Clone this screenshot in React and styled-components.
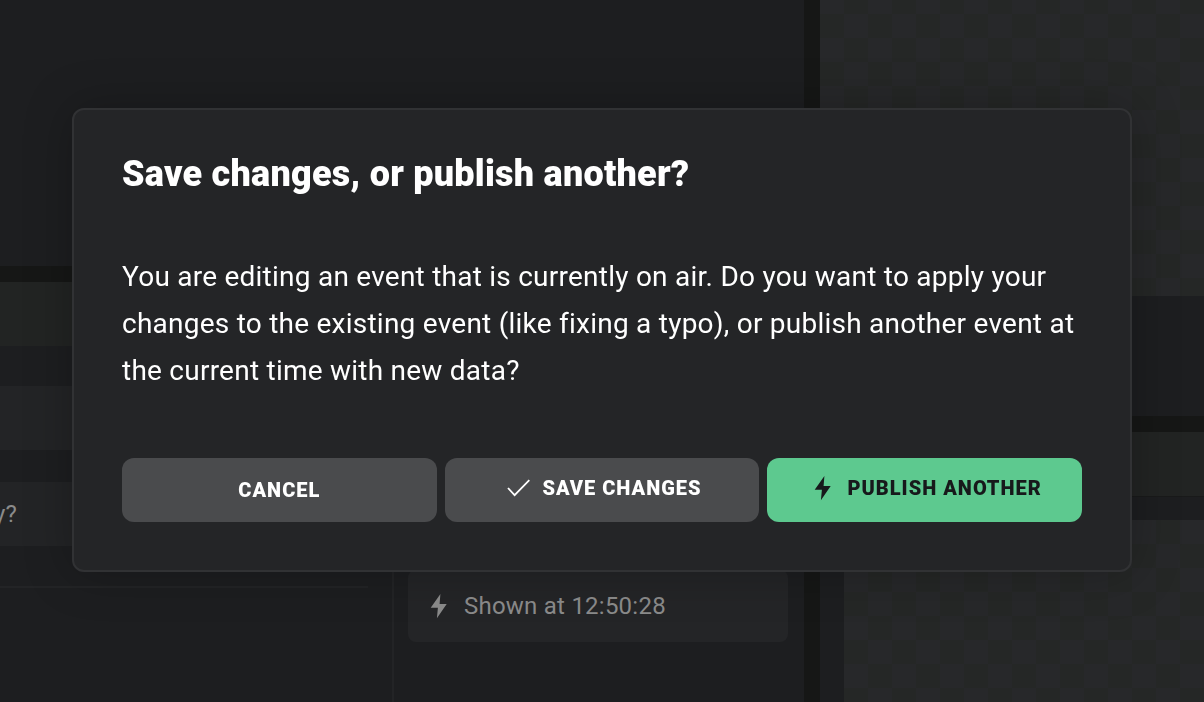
import React from "react";
import styled, { createGlobalStyle, css } from "styled-components";

const GlobalStyle = createGlobalStyle`
  * {
    box-sizing: border-box;
  }

  body {
    margin: 0;
    background: #1d1e20;
    color: #ffffff;
    font-family: Roboto, "Liberation Sans", sans-serif;
    letter-spacing: 0.015em;
    overflow: hidden;
  }
`

const checker = css`
  background-color: #27282a;
  background-image: conic-gradient(#252726 25%, transparent 0 50%, #252726 0 75%, transparent 0);
  background-size: 48px 48px;
`

const Page = styled.main`
  display: grid;
  grid-template-columns: 67fr 16px 32fr;
  height: 100vh;
  overflow: hidden;
`

const Column = styled.div`
  display: flex;
  flex-direction: column;
  min-width: 0;
`

const Gutter = styled.div`
  flex: 0 0 16px;
  background: #161716;
`

const Stage = styled.div`
  flex: 0 0 266px;
`

const Bar = styled.div`
  flex: 0 0 64px;
  background: #222423;
`

const Editor = styled.div`
  display: flex;
  flex: 1;
`

const Form = styled.div`
  flex: 1;
  padding: 40px 24px 0 0;
  border-right: 2px solid #232426;
`

const Field = styled.div`
  display: flex;
  align-items: center;
  height: 64px;
  margin-bottom: ${({ $last }) => ($last ? 40 : 32)}px;
  background: #232426;
  color: #8b8b8b;
  font-size: 24px;
`

const FieldText = styled.span`
  margin-left: -6px;
`

const Rule = styled.hr`
  height: 2px;
  margin: 0;
  border: 0;
  background: #232426;
`

const History = styled.div`
  flex: 0 0 51%;
  padding: 224px 16px 0 14px;
`

const HistoryItem = styled.div`
  display: flex;
  align-items: center;
  gap: 10px;
  height: 72px;
  padding: 0 16px;
  border-radius: 8px;
  background: #242527;
  color: #8b8b8b;
  font-size: 24px;
`

const Preview = styled.div`
  ${checker}
  flex: 0 0 296px;
  background-position: 24px 14px;
`

const Info = styled.div`
  flex: 0 0 120px;
`

const Output = styled.div`
  display: flex;
  flex: 1;
  padding: 23px 0 0 24px;
  border-top: 1px solid #191a1a;
`

const OutputPreview = styled.div`
  ${checker}
  flex: 1;
`

const Overlay = styled.div`
  position: fixed;
  inset: 0;
  padding: 108px 72px;
`

const Dialog = styled.section`
  padding: 48px;
  border: 2px solid #313234;
  border-radius: 12px;
  background: #242527;
  box-shadow: 0 0 48px rgba(0, 0, 0, 0.25);
`

const Title = styled.h1`
  margin: 0 0 63px;
  font-size: 36px;
  font-weight: 900;
  line-height: 32px;
`

const Message = styled.p`
  margin: 0 0 64px;
  font-size: 28px;
  line-height: 47px;
`

const Actions = styled.div`
  display: grid;
  grid-template-columns: repeat(3, 1fr);
  gap: 8px;
`

const Button = styled.button`
  display: flex;
  align-items: center;
  justify-content: center;
  gap: 10px;
  height: 64px;
  padding: 0 16px;
  border: 0;
  border-radius: 12px;
  background: ${({ $primary }) => ($primary ? "#5dc98f" : "#4a4b4d")};
  color: ${({ $primary }) => ($primary ? "#17191b" : "#ffffff")};
  font-family: inherit;
  font-size: 20px;
  font-weight: 900;
  letter-spacing: 0.05em;
  text-transform: uppercase;
  cursor: pointer;

  &:has(svg) {
    padding-bottom: 4px;
  }
`

const Icon = styled.svg`
  flex: none;
  width: 30px;
  height: 30px;
`

const BoltIcon = () => (
    <Icon viewBox="0 0 30 30" fill="currentColor" aria-hidden="true">
        <path d="M16.4 3 6.7 16.7h7.2L12.9 27.2 22.7 13.1h-7.1z"/>
    </Icon>
)

const CheckIcon = () => (
    <Icon viewBox="0 0 30 30" fill="none" stroke="currentColor" strokeWidth="1.8" aria-hidden="true">
        <path d="M6 15 12.6 22.1 27.3 7.2"/>
    </Icon>
)

const App = () => (
    <>
        <GlobalStyle/>
        <Page>
            <Column>
                <Stage/>
                <Gutter/>
                <Bar/>
                <Editor>
                    <Form>
                        <Field/>
                        <Field $last>
                            <FieldText>y?</FieldText>
                        </Field>
                        <Rule/>
                    </Form>
                    <History>
                        <HistoryItem>
                            <BoltIcon/>
                            Shown at 12:50:28
                        </HistoryItem>
                    </History>
                </Editor>
            </Column>
            <Gutter/>
            <Column>
                <Preview/>
                <Info/>
                <Gutter/>
                <Bar/>
                <Output>
                    <OutputPreview/>
                </Output>
            </Column>
        </Page>
        <Overlay>
            <Dialog role="dialog" aria-modal="true" aria-labelledby="dialog-title">
                <Title id="dialog-title">Save changes, or publish another?</Title>
                <Message>
                    You are editing an event that is currently on air. Do you want to apply your
                    changes to the existing event (like fixing a typo), or publish another event at
                    the current time with new data?
                </Message>
                <Actions>
                    <Button type="button">Cancel</Button>
                    <Button type="button"><CheckIcon/>Save changes</Button>
                    <Button type="button" $primary><BoltIcon/>Publish another</Button>
                </Actions>
            </Dialog>
        </Overlay>
    </>
)

export default App
